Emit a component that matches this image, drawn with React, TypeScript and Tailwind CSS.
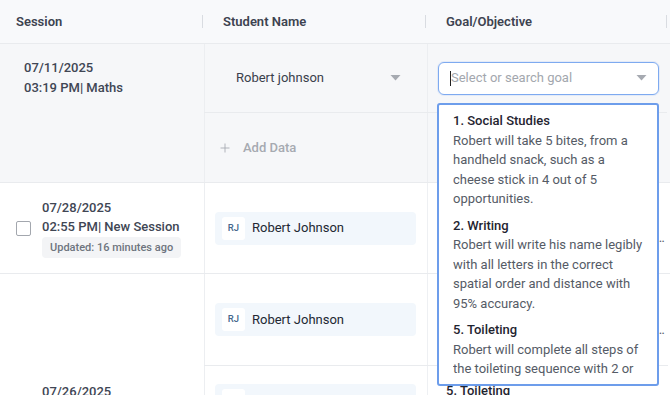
import { Plus } from 'lucide-react'

const goals = [
  {
    title: '1. Social Studies',
    text: 'Robert will take 5 bites, from a handheld snack, such as a cheese stick in 4 out of 5 opportunities.',
  },
  {
    title: '2. Writing',
    text: 'Robert will write his name legibly with all letters in the correct spatial order and distance with 95% accuracy.',
  },
  {
    title: '5. Toileting',
    text: 'Robert will complete all steps of the toileting sequence with 2 or fewer prompts in 4 out of 5 opportunities.',
  },
]

function Caret() {
  return (
    <svg width="11" height="6" viewBox="0 0 11 6" className="shrink-0">
      <path d="M0.5 0 L10.5 0 L5.5 5.5 Z" fill="#a6aab1" />
    </svg>
  )
}

function Chip() {
  return (
    <div className="flex h-[33px] w-[201px] items-center rounded-[4px] bg-[#f2f7fc] pl-[7px]">
      <div className="flex h-[23px] w-[23px] items-center justify-center rounded-[3px] bg-white text-[9.5px] font-medium text-[#48678c]">
        RJ
      </div>
      <span className="ml-[7px] text-[13px] text-[#222833]">Robert Johnson</span>
    </div>
  )
}

function Checkbox() {
  return <div className="h-[15px] w-[15px] shrink-0 rounded-[2px] border-[1.5px] border-[#a3a7ae] bg-white" />
}

function SessionInfo({ date, time }: { date: string; time: string }) {
  return (
    <div className="ml-[11px] font-medium leading-[19px] text-[#404654]">
      <div>{date}</div>
      <div>{time}</div>
      <div className="mt-[1px] inline-block h-[21px] rounded-[4px] bg-[#f3f4f6] px-2 text-[11px] leading-[21px] text-[#6e747e]">
        Updated: 16 minutes ago
      </div>
    </div>
  )
}

function GoalPreview() {
  return (
    <div className="w-[240px] shrink-0 pl-[18px] text-[13px] leading-5">
      <div className="font-medium text-[#1f2430]">5. Toileting</div>
      <div className="truncate text-[#555b66]">
        Robert will complete all steps of the toileting sequence with 2 or fewer prompts
      </div>
    </div>
  )
}

export default function App() {
  return (
    <div className="relative h-[395px] w-[670px] overflow-hidden bg-white font-['Roboto',sans-serif] text-[13px] text-[#3b4150]">
      {/* header */}
      <div className="flex h-[44px] border-b border-[#e9ebee] bg-[#f8f9fb] text-[13px] font-semibold text-[#3d4350]">
        <div className="flex w-[204px] shrink-0 items-center pl-4 pr-[1px]">
          <span>Session</span>
          <span className="ml-auto h-[13px] w-[1.5px] bg-[#d9dce1]" />
        </div>
        <div className="flex w-[223px] shrink-0 items-center pl-[19px] pr-[1px]">
          <span>Student Name</span>
          <span className="ml-auto h-[13px] w-[1.5px] bg-[#d9dce1]" />
        </div>
        <div className="flex w-[240px] shrink-0 items-center pl-[19px]">
          <span>Goal/Objective</span>
          <span className="ml-auto h-[13px] w-[1.5px] bg-[#d9dce1]" />
        </div>
      </div>

      {/* row 1 - editing */}
      <div className="flex h-[139px] border-b border-[#e9ebee] bg-[#f6f7f9]">
        <div className="w-[204px] shrink-0 pl-6 pt-[14px] font-medium leading-5 text-[#404654]">
          <div>07/11/2025</div>
          <div>03:19 PM| Maths</div>
        </div>
        <div className="flex flex-col">
          <div className="flex h-[69px] border-b border-[#e9ebee]">
            <div className="flex w-[223px] items-center border-l border-[#eceef1] pl-[31px] pr-[26px]">
              <span className="text-[13px] text-[#3a404c]">Robert johnson</span>
              <span className="ml-auto">
                <Caret />
              </span>
            </div>
            <div className="flex w-[240px] items-center border-l border-[#eceef1] pl-[10px]">
              <div className="flex h-[33px] w-[221px] items-center rounded-[6px] border border-[#7eaaf0] bg-white pl-[11px] pr-[11px] shadow-[0_0_0_1px_rgba(126,170,240,0.15)]">
                <span className="h-[15px] w-px bg-[#222]" />
                <span className="text-[13px] text-[#a3a7ae]">Select or search goal</span>
                <span className="ml-auto">
                  <Caret />
                </span>
              </div>
            </div>
          </div>
          <div className="flex flex-1">
            <div className="flex w-[223px] items-center border-l border-[#eceef1] pl-[13px] text-[13px] font-medium text-[#a6aab1]">
              <Plus size={14} strokeWidth={1.5} />
              <span className="ml-[11px]">Add Data</span>
            </div>
            <div className="w-[240px] border-l border-[#eceef1]" />
          </div>
        </div>
      </div>

      {/* row 2 */}
      <div className="flex h-[91px] border-b border-[#e9ebee]">
        <div className="flex w-[204px] shrink-0 items-center pl-4">
          <Checkbox />
          <SessionInfo date="07/28/2025" time="02:55 PM| New Session" />
        </div>
        <div className="flex w-[223px] shrink-0 items-center border-l border-[#eceef1] px-[10px]">
          <Chip />
        </div>
        <div className="flex items-center border-l border-[#eef0f3]">
          <GoalPreview />
        </div>
      </div>

      {/* row 3 */}
      <div className="flex h-[276px]">
        <div className="flex w-[204px] shrink-0 items-center pl-4">
          <Checkbox />
          <SessionInfo date="07/26/2025" time="11:20 AM| Reading" />
        </div>
        <div className="flex flex-col">
          <div className="flex h-[92px] border-b border-[#e9ebee]">
            <div className="flex w-[223px] items-center border-l border-[#eceef1] px-[10px]">
              <Chip />
            </div>
            <div className="flex items-center border-l border-[#eef0f3]">
              <GoalPreview />
            </div>
          </div>
          <div className="flex h-[92px] border-b border-[#e9ebee]">
            <div className="w-[223px] border-l border-[#eceef1] px-[10px] pt-[18px]">
              <Chip />
            </div>
            <div className="border-l border-[#eef0f3] pt-[15px]">
              <GoalPreview />
            </div>
          </div>
        </div>
      </div>

      {/* goal dropdown */}
      <div className="absolute left-[437px] top-[103px] h-[283px] w-[222px] rounded-[3px] border-2 border-[#6d9deb] bg-white px-[14px] pt-[6px] text-[13px] leading-[19.5px]">
        <div className="h-[267px] overflow-hidden">
          {goals.map((g) => (
            <div key={g.title} className="mb-[7px]">
              <div className="font-medium text-[#1f2430]">{g.title}</div>
              <div className="text-[#555b66]">{g.text}</div>
            </div>
          ))}
        </div>
      </div>
    </div>
  )
}
